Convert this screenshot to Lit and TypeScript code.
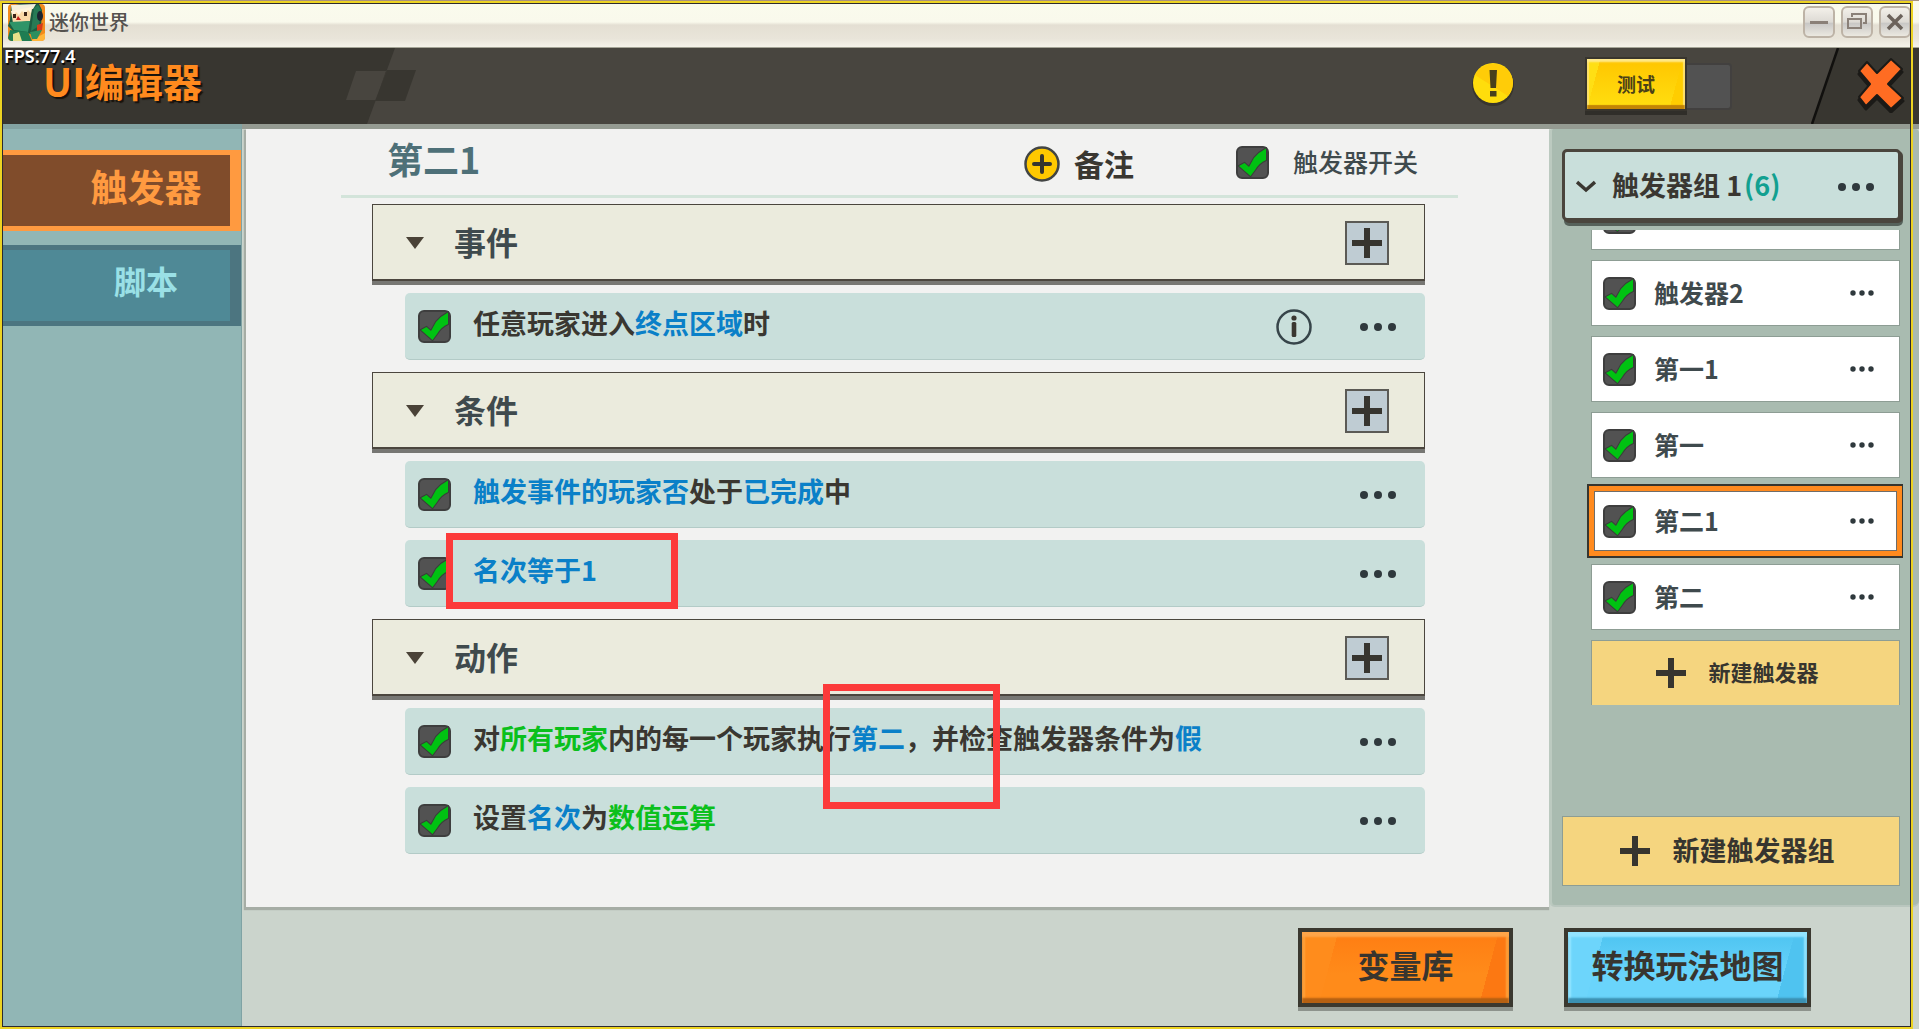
import { LitElement, html, css, svg } from "lit";
import { customElement, property } from "lit/decorators.js";

type Part = [text: string, tone?: "blue" | "green"];
interface Rule { parts: Part[]; info?: boolean; mark?: "mark-rank" | "mark-target" }
interface Section { title: string; rules: Rule[] }

const SECTIONS: Section[] = [
  {
    title: "事件",
    rules: [{ parts: [["任意玩家进入"], ["终点区域", "blue"], ["时"]], info: true }],
  },
  {
    title: "条件",
    rules: [
      { parts: [["触发事件的玩家否", "blue"], ["处于"], ["已完成", "blue"], ["中"]] },
      { parts: [["名次等于1", "blue"]], mark: "mark-rank" },
    ],
  },
  {
    title: "动作",
    rules: [
      {
        parts: [["对"], ["所有玩家", "green"], ["内的每一个玩家执行"], ["第二", "blue"], ["，并检查触发器条件为"], ["假", "blue"]],
        mark: "mark-target",
      },
      { parts: [["设置"], ["名次", "blue"], ["为"], ["数值运算", "green"]] },
    ],
  },
];

const TRIGGERS = ["触发器1", "触发器2", "第一1", "第一", "第二1", "第二"];
const ACTIVE_TRIGGER = "第二1";

@customElement("tick-box")
class TickBox extends LitElement {
  @property() label = "";

  static styles = css`
    :host { display: block; flex: none; }
    .box { position: relative; display: block; width: 33px; height: 33px; }
    .input {
      appearance: none; display: block; box-sizing: border-box; width: 33px; height: 33px; margin: 0;
      border: 2px solid #3e3e3e; border-radius: 6px; background: #525252;
    }
    .tick { position: absolute; inset: 0; pointer-events: none; visibility: hidden; }
    .input:checked + .tick { visibility: visible; }
  `;

  render() {
    return html`<label class="box">
      <input class="input" type="checkbox" checked aria-label=${this.label} />
      <svg class="tick" width="33" height="33" viewBox="0 0 33 33">
        <path d="M3 20L8.500 17L13 21L18 12Q23 6 30 2.500V14Q23 17 19 24L14.500 30Z" fill="#00c212" stroke="#3a3d3a" stroke-width="2" paint-order="stroke" />
      </svg>
    </label>`;
  }
}

@customElement("more-button")
class MoreButton extends LitElement {
  @property({ type: Boolean }) small = false;

  static styles = css`
    :host { display: block; flex: none; }
    .more { display: block; padding: 0; border: 0; background: none; }
    .dots { display: block; }
  `;

  render() {
    const step = this.small ? 9 : 14;
    const r = this.small ? 2.7 : 4;
    const width = step * 2 + 8;
    return html`<button class="more" aria-label="更多">
      <svg class="dots" width=${width} height="20" viewBox="0 0 ${width} 20" fill="#2f393d">
        ${[0, 1, 2].map((i) => svg`<circle cx=${4 + i * step} cy="10" r=${r} />`)}
      </svg>
    </button>`;
  }
}

const plus = (size: number) => html`<svg class="plus" width=${size} height=${size} viewBox="0 0 30 30">
  <path d="M12 0h6v12h12v6H18v12h-6V18H0v-6h12z" fill="#37352f" />
</svg>`;

@customElement("app-root")
class AppRoot extends LitElement {
  static styles = css`
    :host {
      display: block; color: #3a3731; font-family: "Noto Sans CJK SC", sans-serif;
      font-weight: 500; line-height: 1;
    }
    * { box-sizing: border-box; }
    button { margin: 0; padding: 0; border: 0; color: inherit; font: inherit; background: none; }
    h1, h2, p, ul { margin: 0; padding: 0; font: inherit; list-style: none; }
    svg { display: block; flex: none; }

    .window { position: relative; display: flex; flex-direction: column; min-height: 100vh; overflow: hidden; background: #cbd4cc; }
    .frame {
      position: absolute; inset: 1px 6px 0 0; z-index: 5; pointer-events: none;
      border: 2px solid #ecd322; box-shadow: inset 0 0 0 1px #2c2a30;
    }

    .titlebar {
      display: flex; align-items: center; height: 48px; padding: 0 8px; border-top: 1px solid #a8927f;
      border-bottom: 1px solid #a5a597; font-size: 20px; color: #55524f;
      background: linear-gradient(#fafbed 0, #f9f9ec 21px, #e4dfd3 24px, #e9e5da 38px, #f5f3ea 46px);
    }
    .app-name { flex: 1; padding: 0 0 4px 4px; }
    .app-logo { margin-bottom: 4px; }
    .window-controls { display: flex; gap: 6px; padding-bottom: 4px; }
    .window-button {
      display: grid; place-items: center; width: 32px; height: 32px; border: 2px solid #bdb3a6; border-radius: 6px;
      background: linear-gradient(#f3f0e9 0, #dddad4 50%, #c9c8c6 55%, #ebe8e0 100%);
    }

    .header { position: relative; display: flex; align-items: center; height: 76px; padding: 0 14px 0 43px; background: #48453f; }
    .header-left { position: absolute; left: 0; top: 0; }
    .header-right { position: absolute; right: 0; top: 0; }
    .fps { position: absolute; left: 4px; top: -2px; font: 600 18px/20px "Noto Sans", sans-serif; color: #fff; text-shadow: 1px 2px 1px #000; }
    .heading { position: relative; flex: 1; padding-bottom: 12px; font-size: 39px; font-weight: 700; color: #ff8a1e; text-shadow: 2px 2px 1px #17120c; }
    .alert { padding-bottom: 4px; }
    .switch { display: flex; align-items: center; margin: 0 125px 0 71px; }
    .switch-on {
      width: 102px; height: 54px; margin-bottom: 4px; padding-bottom: 2px; border: 2px solid #38352e; color: #4b4117; font-size: 19px; font-weight: 700;
      background: linear-gradient(105deg, #ffdf14 0 12%, transparent 12% 86%, #ffcd00 86%), linear-gradient(#ffc500, #ffdf10);
      box-shadow: inset 0 3px 2px #ffe98c, inset 0 -4px 1px #c28405, inset 2px 0 1px #ffe36c, inset -2px 0 1px #ffe36c, 0 4px 0 #302e29;
    }
    .switch-off { width: 45px; height: 47px; border: 2px solid #42403f; border-left: 0; border-radius: 0 4px 4px 0; background: #525252; }
    .close { position: relative; padding-bottom: 4px; }

    .body { flex: 1; display: flex; }
    .nav { display: flex; flex-direction: column; gap: 14px; width: 242px; padding-top: 21px; border-top: 5px solid #83a3a2; border-right: 1px solid #7fa3a4; background: #91b6b5; }
    .nav-item { height: 81px; padding: 0 0 12px 62px; border: 0 solid #4c7580; border-width: 5px 11px 5px 0; background: #4f8996; color: #9ae0e6; font-size: 32px; font-weight: 700; }
    .nav-item.active { padding-bottom: 8px; border-color: #ff9a40; background: #804c2b; color: #ff9a40; font-size: 37px; }

    .workspace { flex: 1; display: flex; flex-direction: column; min-width: 0; }
    .panels { flex: 1; display: flex; border-top: 5px solid #959b92; }
    .editor { flex: 1; min-width: 0; margin-left: 4px; padding: 0 91px 0 95px; background: #f2f2f1; box-shadow: -1px 2px 1px 1px #a6ada5; }
    .editor-head { display: flex; align-items: center; height: 69px; padding: 0 40px 0 46px; border-bottom: 3px solid #d3e4da; }
    .trigger-name { flex: 1; padding-bottom: 8px; color: #4e7078; font-size: 36px; font-weight: 700; }
    .note { display: flex; align-items: center; gap: 14px; font-size: 30px; font-weight: 700; padding-top: 4px; }
    .note-text { padding-bottom: 2px; }
    .toggle { display: flex; align-items: center; gap: 24px; margin-left: 102px; color: #3f4a4d; font-size: 25px; }
    .toggle-text { padding-bottom: 2px; }

    .sections { display: flex; flex-direction: column; gap: 12px; padding: 6px 33px 47px 31px; }
    .section-head {
      display: flex; align-items: center; height: 77px; margin-bottom: 12px; padding: 2px 35px 0 32px;
      border: 1px solid #4b463e; border-bottom-width: 2px; background: #ebebdd; box-shadow: 0 4px 0 #777773;
    }
    .section-title { flex: 1; padding: 0 0 4px 29px; color: #3f4a4d; font-size: 32px; font-weight: 700; }
    .add { display: grid; place-items: center; width: 44px; height: 44px; border: 2px solid #5b5a55; background: #bfccd3; }
    .rules { display: flex; flex-direction: column; gap: 12px; padding-left: 33px; }
    .rule {
      position: relative; display: flex; align-items: center; height: 67px; padding: 1px 29px 0 13px;
      border-bottom: 1px solid #b3cbc7; border-radius: 5px; background: #c9dfdb;
    }
    .rule-text { flex: 1; padding: 0 0 8px 22px; font-size: 27px; font-weight: 700; white-space: nowrap; }
    .blue { color: #0a80c8; }
    .green { color: #0bc01c; }
    .info { margin-right: 48px; }
    .mark { position: absolute; z-index: 2; border: 7px solid #fc3a3a; pointer-events: none; }
    .mark-rank { left: 41px; top: -7px; width: 232px; height: 76px; }
    .mark-target { left: 418px; top: -24px; width: 177px; height: 125px; }

    .groups { display: flex; flex-direction: column; width: 370px; padding: 20px 16px 19px 10px; border-left: 3px solid #bccac0; border-bottom: 2px solid #b9c6be; border-radius: 4px 4px 6px 6px; background: #a9bbb0; }
    .group-head {
      display: flex; align-items: center; height: 72px; margin-right: 2px; padding: 4px 24px 0 11px; border: 3px solid #4a453d; border-radius: 5px;
      background: #c9dfdb; box-shadow: 2px 2px 0 #4a453d, 2px 5px 0 #56615a; font-size: 27px;
    }
    .group-name { flex: 1; padding: 0 0 6px 16px; font-weight: 700; }
    .count { margin-left: 2px; color: #12a090; }
    .viewport { flex: 1 1 0px; display: flex; flex-direction: column; justify-content: flex-end; min-height: 0; margin: 9px 0 111px 25px; padding: 0 3px 0 4px; overflow: hidden; }
    .list { display: flex; flex-direction: column; gap: 10px; }
    .item { display: flex; align-items: center; height: 66px; padding: 0 24px 0 11px; border: 1px solid #8d9d94; background: #fff; }
    .item.active { padding: 0 22px 0 9px; border: 3px solid #ff8a1e; box-shadow: inset 0 0 0 1px #6f6d69, 0 0 0 2px #ff8a1e, 0 0 0 4px #37352f; }
    .item-name { flex: 1; padding: 0 0 2px 18px; color: #3f4a4d; font-size: 25px; font-weight: 700; }
    .create { display: flex; align-items: center; justify-content: center; border: 1px solid #8d9d94; background: #f5d57f; color: #37352f; font-weight: 700; }
    .create-trigger { width: 100%; height: 65px; gap: 22px; padding-right: 16px; border-bottom: 0; font-size: 22px; }
    .create-group { height: 70px; margin-right: 3px; gap: 23px; padding-right: 8px; font-size: 27px; }
    .create-text { padding-bottom: 4px; }

    .footer { display: flex; justify-content: flex-end; gap: 51px; padding: 21px 108px 22px 0; font-size: 32px; font-weight: 700; color: #38352f; }
    .action { height: 79px; padding-bottom: 8px; border: 4px solid #3a382f; }
    .variables {
      width: 215px;
      background: linear-gradient(105deg, #ff8c1c 0 16%, transparent 16% 87%, #fc7812 87%), linear-gradient(#ff7d12, #ff8b1a 60%);
      box-shadow: inset 0 5px 2px #ffa549, inset 0 -5px 2px #b56012, inset 3px 0 2px #ffa23c, inset -3px 0 2px #ffa23c, 0 4px 0 #8d938c;
    }
    .convert {
      width: 247px;
      background: linear-gradient(105deg, #6dd5fb 0 14%, transparent 14% 88%, #4fc3f0 88%), linear-gradient(#4cc3f0, #6ad4fb 60%);
      box-shadow: inset 0 5px 2px #93e4ff, inset 0 -5px 2px #3b90b2, inset 3px 0 2px #96e6ff, inset -3px 0 2px #96e6ff, 0 4px 0 #8d938c;
    }
  `;

  private renderRule(rule: Rule) {
    return html`<li class="rule">
      <tick-box label=${rule.parts.map((p) => p[0]).join("")}></tick-box>
      <p class="rule-text">${rule.parts.map(([text, tone]) => html`<span class=${tone ?? ""}>${text}</span>`)}</p>
      ${rule.info
        ? html`<button class="info" aria-label="说明">
            <svg width="36" height="36" viewBox="0 0 36 36">
              <circle cx="18" cy="18" r="16.500" fill="none" stroke="#37454a" stroke-width="2.500" />
              <circle cx="18" cy="9" r="2.600" fill="#3a3731" />
              <rect x="15.700" y="13" width="4.600" height="15" rx="1.500" fill="#3a3731" />
            </svg>
          </button>`
        : ""}
      <more-button></more-button>
      ${rule.mark ? html`<span class="mark ${rule.mark}"></span>` : ""}
    </li>`;
  }

  private renderSection(section: Section) {
    return html`<section>
      <div class="section-head">
        <button aria-label="折叠">
          <svg width="20" height="14" viewBox="0 0 20 14"><path d="M1 1h18L10 13z" fill="#4a4237" /></svg>
        </button>
        <h2 class="section-title">${section.title}</h2>
        <button class="add" aria-label="添加">${plus(30)}</button>
      </div>
      <ul class="rules">${section.rules.map((r) => this.renderRule(r))}</ul>
    </section>`;
  }

  private renderLogo() {
    return html`<svg class="app-logo" width="37" height="37" viewBox="0 0 37 37">
      <rect width="37" height="37" rx="4" fill="#f28a1c" />
      <path d="M22 37L37 29V33Q37 37 33 37Z" fill="#ffb53a" />
      <path d="M3 2L12 0H31L34 6L33 24L24 30L5 27L0 22L2 16Z" fill="#1c5c41" />
      <path d="M3 1L28 0L25 5L4 8Z" fill="#f4efdc" />
      <path d="M3 7L24 4L22 17L5 19Z" fill="#fbd9a8" />
      <path d="M3 7L24 3L23 9L20 6L17 10L14 7L11 11L8 8L5 12Z" fill="#fff4dc" />
      <path d="M5 10h3v4H5zM16 8h3v4h-3z" fill="#3c2418" />
      <path d="M10 12L13 16H8Z" fill="#c32018" />
      <path d="M1 18L22 17L20 28L6 26Z" fill="#2f9468" />
      <path d="M26 4L30 1L33 6L31 22L23 27Z" fill="#277a55" />
      <ellipse cx="32" cy="12" rx="3" ry="5" fill="#1c2430" />
      <path d="M2 26L20 28L24 37H4Q1 37 0 34Z" fill="#1f7d52" />
      <path d="M5 30L11 28L14 37H5Z" fill="#e8e08a" />
      <path d="M29 21L35 19L34 26L29 28Z" fill="#d43a1c" />
      <path d="M22 28L34 26L29 35H24Z" fill="#2b8f5f" />
    </svg>`;
  }

  render() {
    return html`<div class="window">
      <div class="titlebar">
        ${this.renderLogo()}
        <span class="app-name">迷你世界</span>
        <div class="window-controls">
          <button class="window-button" aria-label="最小化">
            <svg width="20" height="20" viewBox="0 0 20 20"><path d="M1 9h18v3H1z" fill="#8a8078" /></svg>
          </button>
          <button class="window-button" aria-label="还原">
            <svg width="20" height="20" viewBox="0 0 20 20" fill="none" stroke="#8a8078"><path d="M1 7h13v9H1zM5 5V2h14v9h-3" stroke-width="2" /></svg>
          </button>
          <button class="window-button" aria-label="关闭窗口">
            <svg width="20" height="20" viewBox="0 0 20 20"><path d="M3 3L17 17M17 3L3 17" stroke="#6b625b" stroke-width="3.500" /></svg>
          </button>
        </div>
      </div>

      <header class="header">
        <svg class="header-left" width="420" height="76" viewBox="0 0 420 76">
          <path d="M0 0H395L367 76H0Z" fill="#383630" />
          <path d="M356 23H386L376 52H346Z" fill="#48453f" />
          <path d="M387 22H416L405 53H375Z" fill="#383630" />
        </svg>
        <svg class="header-right" width="108" height="76" viewBox="0 0 108 76">
          <path d="M27 0H108V76H1Z" fill="#383630" />
          <path d="M27 0L1 76" stroke="#11100e" stroke-width="2.500" />
        </svg>
        <h1 class="heading">UI编辑器</h1>
        <span class="fps">FPS:77.4</span>
        <button class="alert" aria-label="提示">
          <svg width="42" height="44" viewBox="0 0 42 44">
            <circle cx="21" cy="23" r="21" fill="#38352e" />
            <circle cx="21" cy="21" r="20" fill="#ffdd0c" />
            <path d="M3 13A20 20 0 0 1 41 21Q40 29 36 34Z" fill="#ffcc08" />
            <path d="M17.500 8h7.500l-1 18h-5.500zM18 29h6.500v5.500H18z" fill="#48401c" />
          </svg>
        </button>
        <div class="switch">
          <button class="switch-on">测试</button>
          <span class="switch-off"></span>
        </div>
        <button class="close" aria-label="关闭">
          <svg width="48" height="58" viewBox="0 0 48 58">
            <path d="M10 7L20 18L34 4L45 14L31 29L46 43L34 54L20 40L9 51L2 42L13 29L2 16Z" fill="#1b1a17" stroke="#1b1a17" stroke-width="3" stroke-linejoin="round" transform="translate(0 3)" />
            <path d="M10 7L20 18L34 4L45 14L31 29L46 43L34 54L20 40L9 51L2 42L13 29L2 16Z" fill="#ff6c22" stroke="#1b1a17" stroke-width="2" stroke-linejoin="round" />
          </svg>
        </button>
      </header>

      <div class="body">
        <nav class="nav">
          <button class="nav-item active">触发器</button>
          <button class="nav-item">脚本</button>
        </nav>
        <div class="workspace">
          <div class="panels">
            <main class="editor">
              <div class="editor-head">
                <h2 class="trigger-name">第二1</h2>
                <button class="note">
                  <svg width="36" height="36" viewBox="0 0 36 36">
                    <circle cx="18" cy="18" r="16.500" fill="#ffc800" stroke="#424544" stroke-width="2.500" />
                    <path d="M18 10V26M10 18H26" stroke="#37352f" stroke-width="4" stroke-linecap="round" />
                  </svg>
                  <span class="note-text">备注</span>
                </button>
                <div class="toggle">
                  <tick-box label="触发器开关"></tick-box>
                  <span class="toggle-text">触发器开关</span>
                </div>
              </div>
              <div class="sections">${SECTIONS.map((s) => this.renderSection(s))}</div>
            </main>

            <aside class="groups">
              <div class="group-head">
                <button aria-label="折叠">
                  <svg width="20" height="14" viewBox="0 0 20 14"><path d="M1 2L10 10L19 2" fill="none" stroke="#3a3731" stroke-width="3.500" /></svg>
                </button>
                <h2 class="group-name">触发器组 1<span class="count">(6)</span></h2>
                <more-button></more-button>
              </div>
              <div class="viewport">
                <ul class="list">
                  ${TRIGGERS.map(
                    (name) => html`<li class="item ${name === ACTIVE_TRIGGER ? "active" : ""}">
                      <tick-box label=${name}></tick-box>
                      <span class="item-name">${name}</span>
                      <more-button small></more-button>
                    </li>`,
                  )}
                  <li><button class="create create-trigger">${plus(30)}<span class="create-text">新建触发器</span></button></li>
                </ul>
              </div>
              <button class="create create-group">${plus(30)}<span class="create-text">新建触发器组</span></button>
            </aside>
          </div>

          <footer class="footer">
            <button class="action variables">变量库</button>
            <button class="action convert">转换玩法地图</button>
          </footer>
        </div>
      </div>
      <div class="frame"></div>
    </div>`;
  }
}
